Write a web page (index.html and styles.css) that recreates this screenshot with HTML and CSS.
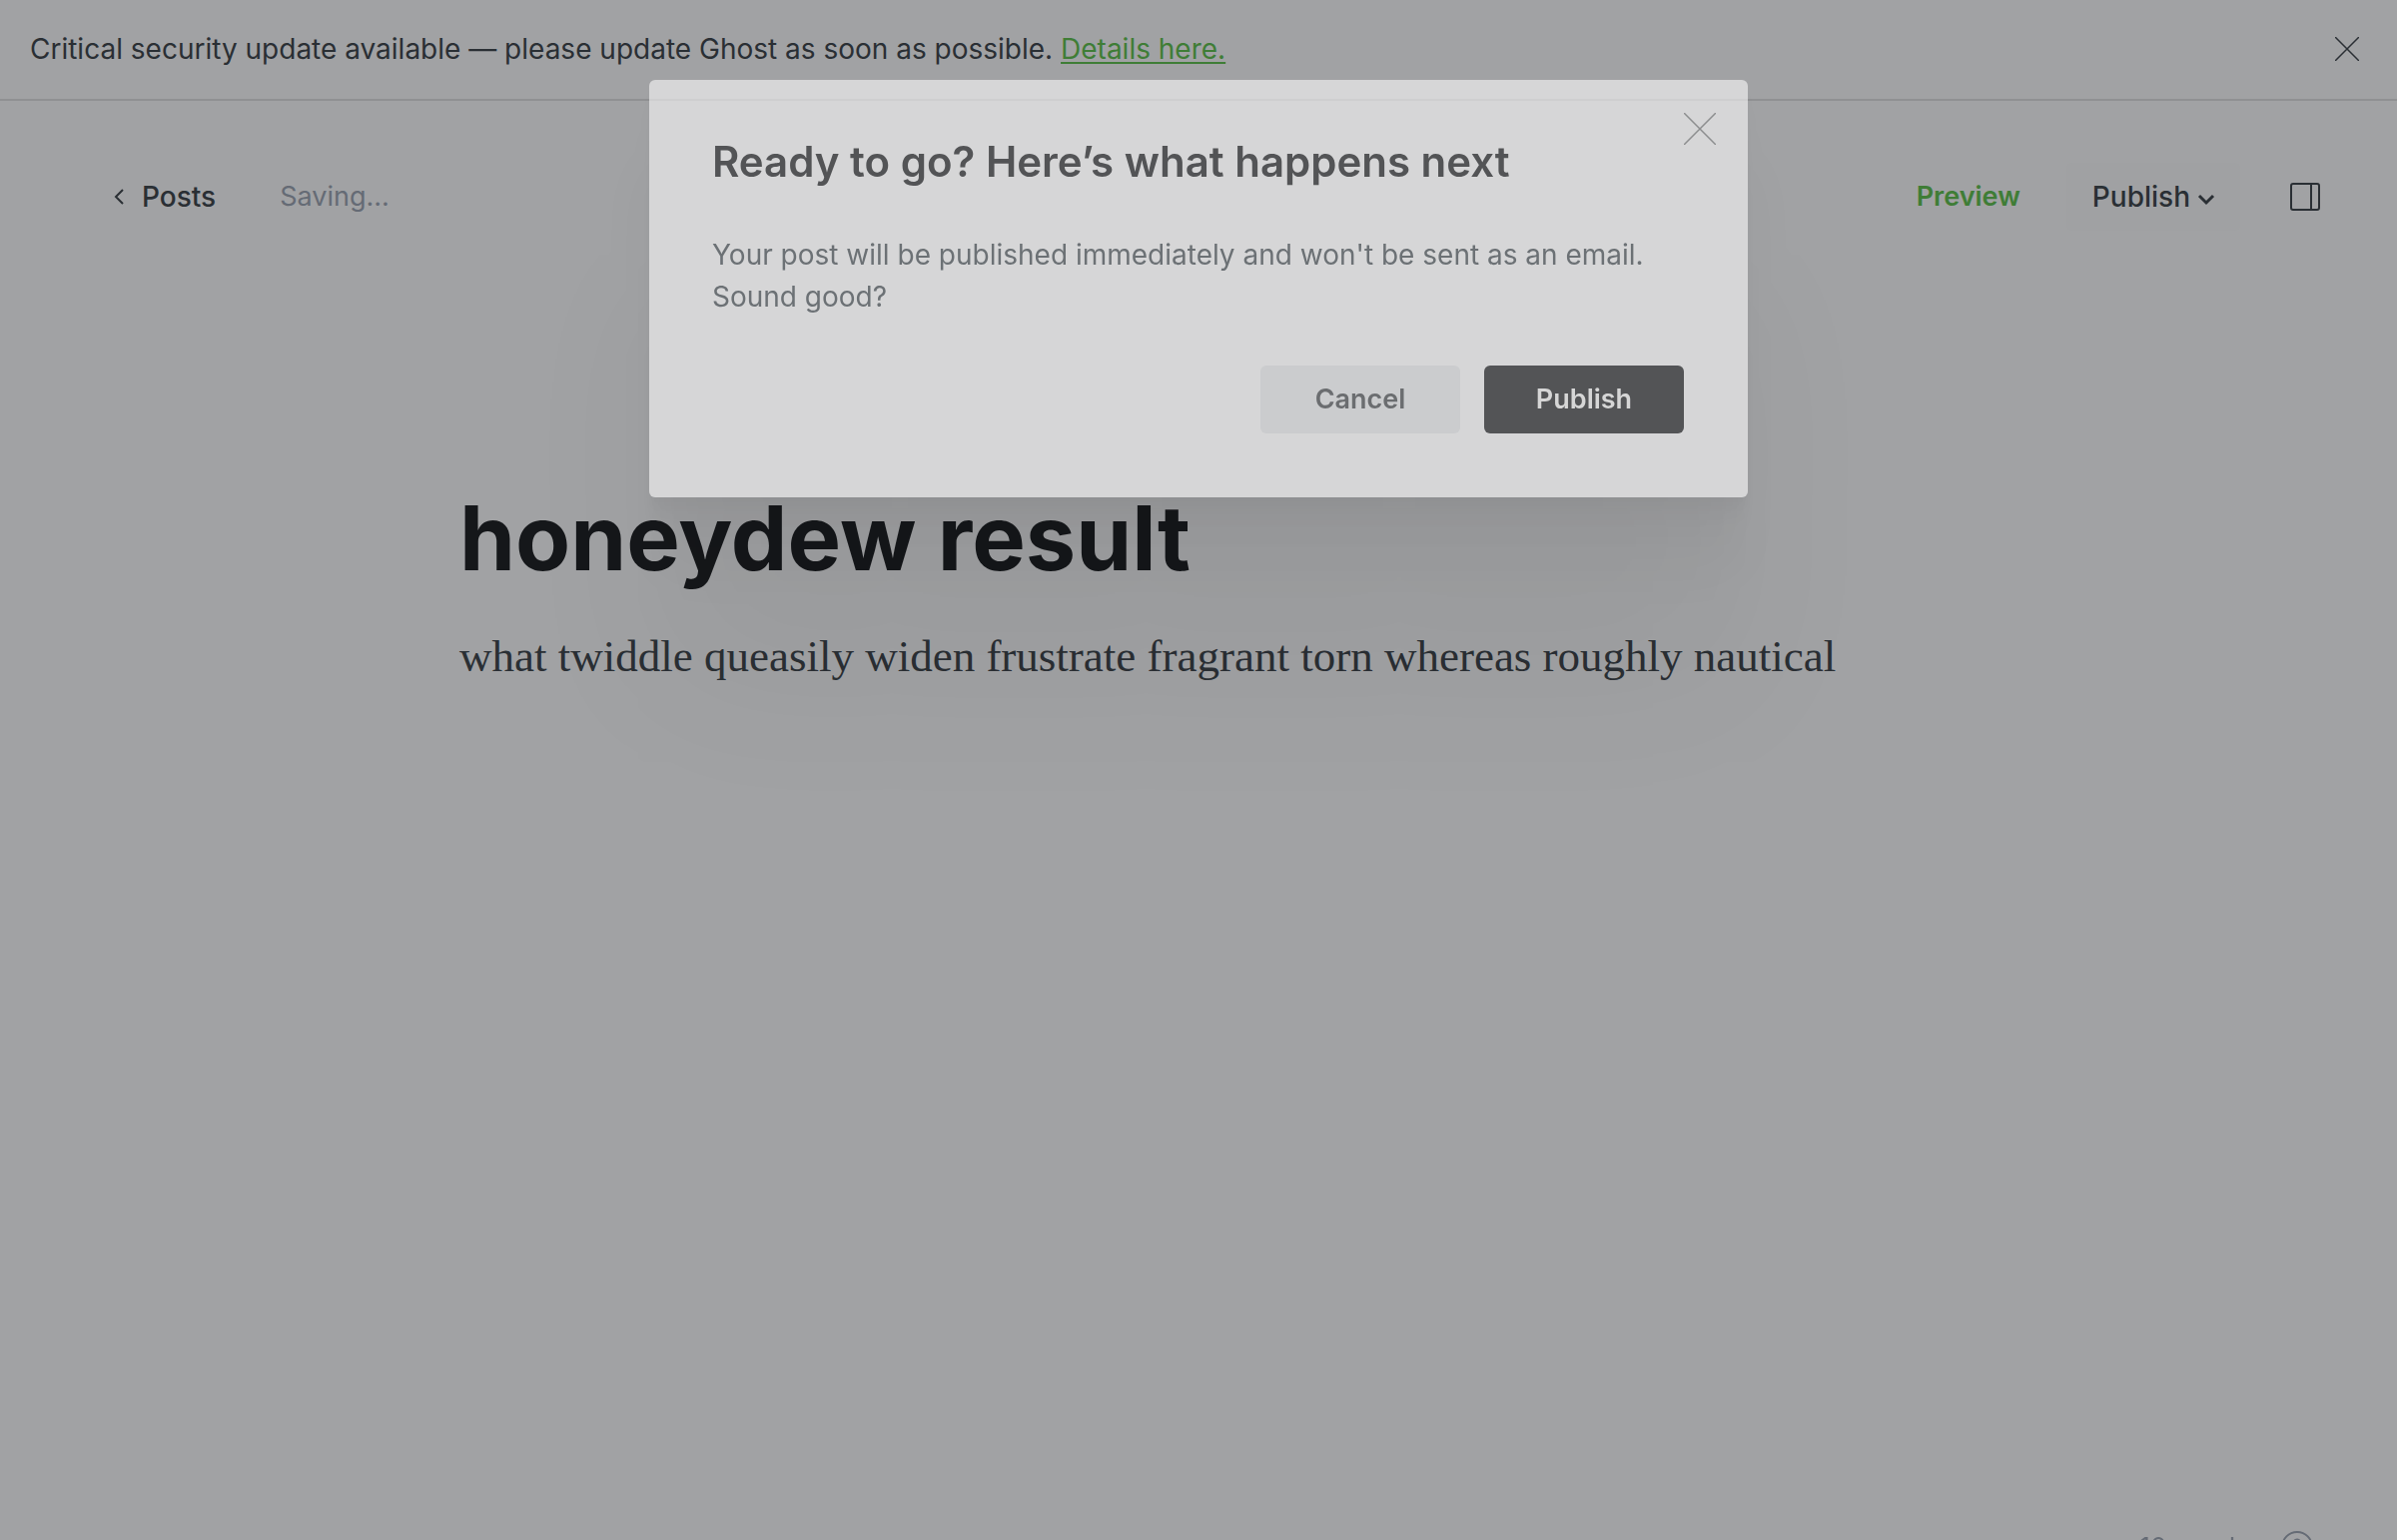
FILE: index.html
```html
<!DOCTYPE html>
<html lang="en">
<head>
<meta charset="utf-8">
<meta name="viewport" content="width=device-width, initial-scale=1">
<title>honeydew result</title>
<link rel="stylesheet" href="styles.css">
</head>
<body>
<aside class="notice">
  <p class="notice-text">Critical security update available — please update Ghost as soon as possible. <a class="notice-link" href="#details">Details here.</a></p>
  <button class="icon-button" type="button" aria-label="Dismiss">
    <svg class="notice-close" viewBox="0 0 24 24" aria-hidden="true"><path d="M0 0l24 24M24 0L0 24"/></svg>
  </button>
</aside>
<header class="toolbar">
  <nav class="toolbar-side">
    <a class="back" href="#posts">
      <svg class="back-icon" viewBox="0 0 10 16" aria-hidden="true"><path d="M9 1L2 8l7 7"/></svg>
      <span>Posts</span>
    </a>
    <span class="saving">Saving...</span>
  </nav>
  <div class="toolbar-actions">
    <button class="preview" type="button">Preview</button>
    <button class="publish-menu" type="button">
      <span>Publish</span>
      <svg class="menu-icon" viewBox="0 0 16 10" aria-hidden="true"><path d="M1 1l7 7 7-7"/></svg>
    </button>
    <button class="icon-button" type="button" aria-label="Settings">
      <svg class="panel-icon" viewBox="0 0 30 28" aria-hidden="true"><rect x="1" y="1" width="28" height="26" rx="2"/><path d="M21 1v26"/></svg>
    </button>
  </div>
</header>
<main class="post">
  <h1 class="post-title">honeydew result</h1>
  <p class="post-body">what twiddle queasily widen frustrate fragrant torn whereas roughly nautical</p>
</main>
<footer class="status">
  <span>10 words</span>
  <svg class="help-icon" viewBox="0 0 32 32" aria-hidden="true"><circle cx="16" cy="16" r="15"/><path d="M12 12a4 4 0 1 1 6 4q-2 1-2 4M16 23v2"/></svg>
</footer>
<div class="overlay">
  <section class="modal" role="dialog" aria-modal="true" aria-labelledby="modal-title">
    <button class="icon-button modal-close" type="button" aria-label="Close">
      <svg class="modal-close-icon" viewBox="0 0 32 32" aria-hidden="true"><path d="M0 0l32 32M32 0L0 32"/></svg>
    </button>
    <h2 class="modal-title" id="modal-title">Ready to go? Here’s what happens next</h2>
    <p class="modal-text">Your post will be published immediately and won't be sent as an email. Sound good?</p>
    <div class="modal-actions">
      <button class="button" type="button">Cancel</button>
      <button class="button button-primary" type="button">Publish</button>
    </div>
  </section>
</div>
</body>
</html>
```
FILE: styles.css
```css
* {
  box-sizing: border-box;
}

body {
  margin: 0;
  min-height: 100vh;
  overflow: hidden;
  background: #a1a2a4;
  color: #2a2f34;
  font: 28px/42px Inter, "Liberation Sans", sans-serif;
}

h1, h2, p {
  margin: 0;
}

button {
  padding: 0;
  border: 0;
  background: none;
  color: inherit;
  font: inherit;
}

svg {
  display: block;
  fill: none;
  stroke: currentColor;
  stroke-width: 2;
}

.icon-button {
  display: flex;
}

.notice {
  display: flex;
  align-items: center;
  justify-content: space-between;
  padding: 28px 38px 29px 30px;
  border-bottom: 2px solid #8f9092;
}

.notice-link {
  color: #3f7d36;
  text-decoration-thickness: 2px;
  text-underline-offset: 3px;
}

.notice-close {
  width: 24px;
  height: 24px;
  stroke-width: 1.5;
}

.toolbar {
  display: flex;
  align-items: center;
  justify-content: space-between;
  padding: 62px 77px 0 114px;
}

.toolbar-side {
  display: flex;
  align-items: center;
  gap: 64px;
}

.back {
  display: flex;
  align-items: center;
  gap: 18px;
  color: inherit;
  font-weight: 500;
  text-decoration: none;
}

.back-icon {
  width: 10px;
  height: 16px;
}

.saving {
  color: #656b75;
  font-size: 27px;
}

.toolbar-actions {
  display: flex;
  align-items: center;
}

.preview {
  color: #3f7d36;
  font-size: 27px;
  font-weight: 600;
}

.publish-menu {
  display: flex;
  align-items: center;
  gap: 8px;
  height: 68px;
  margin: 0 50px 0 46px;
  padding: 0 26px;
  border-radius: 6px;
  background: #a0a1a3;
  font-weight: 500;
}

.menu-icon {
  width: 16px;
  height: 10px;
  margin-top: 6px;
  stroke-width: 3;
  overflow: visible;
}

.panel-icon {
  width: 30px;
  height: 28px;
}

.post {
  max-width: 1480px;
  margin: 0 auto;
  padding-top: 250px;
}

.post-title {
  color: #15171a;
  font-size: 90px;
  font-weight: 700;
  line-height: 116px;
}

.post-body {
  margin-top: 28px;
  font: 45px/64px "Liberation Serif", serif;
}

.status {
  position: fixed;
  right: 84px;
  bottom: -24px;
  display: flex;
  align-items: center;
  gap: 32px;
  color: #656b75;
  font-size: 26px;
  line-height: 34px;
}

.help-icon {
  width: 32px;
  height: 32px;
}

.overlay {
  position: fixed;
  inset: 0;
  display: flex;
  align-items: flex-start;
  justify-content: center;
  padding-top: 80px;
}

.modal {
  position: relative;
  width: 100%;
  max-width: 1100px;
  padding: 56px 64px 64px 63px;
  border-radius: 6px;
  background: rgba(255, 255, 255, 0.56);
  box-shadow:
    0 6px 4px rgba(0, 0, 0, 0.01),
    0 13px 11px rgba(0, 0, 0, 0.02),
    0 25px 20px rgba(0, 0, 0, 0.02),
    0 45px 36px rgba(0, 0, 0, 0.02),
    0 84px 67px rgba(0, 0, 0, 0.03),
    0 200px 160px rgba(0, 0, 0, 0.04);
}

.modal-close {
  position: absolute;
  top: 33px;
  right: 32px;
  color: #8d8e8f;
}

.modal-close-icon {
  width: 32px;
  height: 32px;
  stroke-width: 1.5;
}

.modal-title {
  color: #535456;
  font-size: 42px;
  font-weight: 600;
  line-height: 52px;
}

.modal-text {
  margin-top: 46px;
  color: #6c7175;
}

.modal-actions {
  display: flex;
  justify-content: flex-end;
  gap: 24px;
  margin-top: 48px;
}

.button {
  width: 200px;
  height: 68px;
  border-radius: 6px;
  background: #cbccce;
  color: #6b6d70;
  font-size: 27px;
  font-weight: 600;
}

.button-primary {
  background: #535456;
  color: #d6d6d6;
}
```
